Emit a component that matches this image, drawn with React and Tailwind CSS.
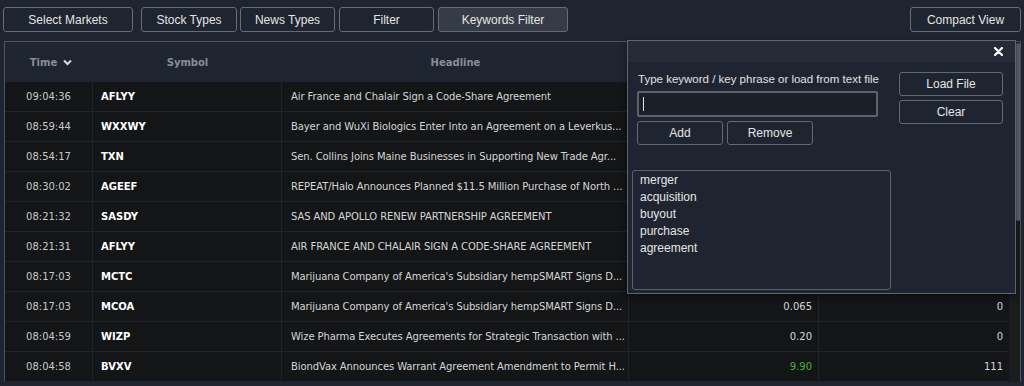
import { useState } from "react";

const rows = [
  { time: "09:04:36", symbol: "AFLYY", headline: "Air France and Chalair Sign a Code-Share Agreement", price: "4.97", vol: "0" },
  { time: "08:59:44", symbol: "WXXWY", headline: "Bayer and WuXi Biologics Enter Into an Agreement on a Leverkus...", price: "12.40", vol: "0" },
  { time: "08:54:17", symbol: "TXN", headline: "Sen. Collins Joins Maine Businesses in Supporting New Trade Agr...", price: "96.15", vol: "0" },
  { time: "08:30:02", symbol: "AGEEF", headline: "REPEAT/Halo Announces Planned $11.5 Million Purchase of North ...", price: "0.16", vol: "0" },
  { time: "08:21:32", symbol: "SASDY", headline: "SAS AND APOLLO RENEW PARTNERSHIP AGREEMENT", price: "2.11", vol: "0" },
  { time: "08:21:31", symbol: "AFLYY", headline: "AIR FRANCE AND CHALAIR SIGN A CODE-SHARE AGREEMENT", price: "4.97", vol: "0" },
  { time: "08:17:03", symbol: "MCTC", headline: "Marijuana Company of America's Subsidiary hempSMART Signs D...", price: "0.065", vol: "0" },
  { time: "08:17:03", symbol: "MCOA", headline: "Marijuana Company of America's Subsidiary hempSMART Signs D...", price: "0.065", vol: "0" },
  { time: "08:04:59", symbol: "WIZP", headline: "Wize Pharma Executes Agreements for Strategic Transaction with ...", price: "0.20", vol: "0" },
  { time: "08:04:58", symbol: "BVXV", headline: "BiondVax Announces Warrant Agreement Amendment to Permit H...", price: "9.90", vol: "111", up: true },
];

const keywords = ["merger", "acquisition", "buyout", "purchase", "agreement"];

const TopButton = ({ label, active, className }) => (
  <button
    className={
      "h-[25px] rounded-[3px] border border-[#666c76] text-[12px] text-[#e4e4e4] " +
      (active ? "bg-[#363c47] " : "bg-[#1e2430] ") +
      className
    }
  >
    {label}
  </button>
);

const PanelButton = ({ label, className }) => (
  <button
    className={
      "h-[24px] rounded-[3px] border border-[#636973] bg-[#1e2430] text-[12px] text-[#e4e4e4] " +
      className
    }
  >
    {label}
  </button>
);

const App = () => {
  const [keyword, setKeyword] = useState("");

  return (
    <div className="relative h-[386px] w-[1024px] overflow-hidden bg-[#1e2430] font-['Liberation_Sans',Arial,sans-serif]">
      {/* Barra superior */}
      <div className="flex h-[41px] items-start pt-[7px]">
        <TopButton label="Select Markets" className="ml-[3px] w-[130px]" />
        <TopButton label="Stock Types" className="ml-[8px] w-[96px]" />
        <TopButton label="News Types" className="ml-[3px] w-[95px]" />
        <TopButton label="Filter" className="ml-[4px] w-[95px]" />
        <TopButton label="Keywords Filter" active className="ml-[4px] w-[130px]" />
        <TopButton label="Compact View" className="ml-auto mr-[3px] w-[111px]" />
      </div>

      {/* Tabla */}
      <div className="ml-[4px] flex w-[1017px] border-l border-t border-r border-[#4e545e] font-['DejaVu_Sans',Verdana,sans-serif]">
        <div className="w-[1004px]">
          <div className="flex h-[40px] items-center bg-[#1f2530] text-[10px] font-bold text-[#878d96]">
            <div className="flex w-[88px] items-center justify-center gap-[6px] pl-[4px]">
              Time
              <svg width="9" height="7" viewBox="0 0 9 7">
                <path d="M1 1.5 L4.5 5 L8 1.5" stroke="#d8dce2" strokeWidth="2" fill="none" />
              </svg>
            </div>
            <div className="w-[189px] text-center">Symbol</div>
            <div className="w-[347px] text-center">Headline</div>
            <div className="w-[190px] text-center">Price</div>
            <div className="flex-1 text-center">Volume</div>
          </div>
          {rows.map((row, i) => (
            <div
              key={i}
              className="flex h-[30px] items-center border-b border-[#222326] bg-[#141516] text-[10px]"
            >
              <div className="flex h-full w-[88px] items-center justify-center border-r border-[#222326] text-[#c9c9c9]">
                {row.time}
              </div>
              <div className="flex h-full w-[189px] items-center border-r border-[#222326] pl-[8px] font-bold text-white">
                {row.symbol}
              </div>
              <div className="flex h-full w-[347px] items-center overflow-hidden whitespace-nowrap border-r border-[#222326] pl-[9px] tracking-[-0.1px] text-[#d6d6d6]">
                {row.headline}
              </div>
              <div
                className={
                  "flex h-full w-[190px] items-center justify-end border-r border-[#222326] pr-[6px] " +
                  (row.up ? "text-[#3fb72f]" : "text-[#d6d6d6]")
                }
              >
                {row.price}
              </div>
              <div className="flex h-full flex-1 items-center justify-end pr-[6px] text-[#d6d6d6]">
                {row.vol}
              </div>
            </div>
          ))}
        </div>
        {/* Barra de desplazamiento */}
        <div className="flex w-[11px] justify-end bg-[#1b1c1e] pt-[1px]">
          <div className="h-[178px] w-[4px] rounded-[2px] bg-[#5d626a]"></div>
        </div>
      </div>

      {/* Panel de palabras clave */}
      <div className="absolute left-[627px] top-[40px] h-[254px] w-[389px] border border-[#5f6570] bg-[#1f2530] shadow-[0_2px_6px_rgba(0,0,0,0.5)]">
        <div className="flex h-[21px] items-center justify-end bg-[#252b37] pr-[12px]">
          <svg width="9" height="9" viewBox="0 0 9 9">
            <path d="M1 1 L8 8 M8 1 L1 8" stroke="#ffffff" strokeWidth="2.2" strokeLinecap="round" />
          </svg>
        </div>
        <div className="flex pl-[9px] pt-[10px]">
          <div className="w-[241px]">
            <div className="whitespace-nowrap pl-[1px] text-[11.5px] leading-[14px] text-[#e0e0e0]">
              Type keyword / key phrase or load from text file
            </div>
            <div className="relative mt-[5px] flex h-[26px] items-center rounded-[2px] border-2 border-[#5d636d] bg-[#1a1f28] px-[3px]">
              <input
                value={keyword}
                onChange={(e) => setKeyword(e.target.value)}
                className="h-full w-full bg-transparent text-[12px] text-white outline-none"
              />
              <div className="absolute left-[4px] top-[4px] h-[14px] w-[1px] bg-[#e0e0e0]"></div>
            </div>
            <div className="mt-[4px] flex gap-[4px]">
              <PanelButton label="Add" className="w-[86px]" />
              <PanelButton label="Remove" className="w-[86px]" />
            </div>
          </div>
          <div className="ml-[21px] flex flex-col gap-[4px]">
            <PanelButton label="Load File" className="w-[104px]" />
            <PanelButton label="Clear" className="w-[104px]" />
          </div>
        </div>
        <div className="ml-[4px] mt-[25px] h-[120px] w-[259px] rounded-[3px] border border-[#5d636d] bg-[#1f2530] pl-[7px] pt-[1px]">
          {keywords.map((k) => (
            <div key={k} className="h-[17px] text-[12px] leading-[17px] text-[#e4e4e4]">
              {k}
            </div>
          ))}
        </div>
      </div>
    </div>
  );
};

export default App;
